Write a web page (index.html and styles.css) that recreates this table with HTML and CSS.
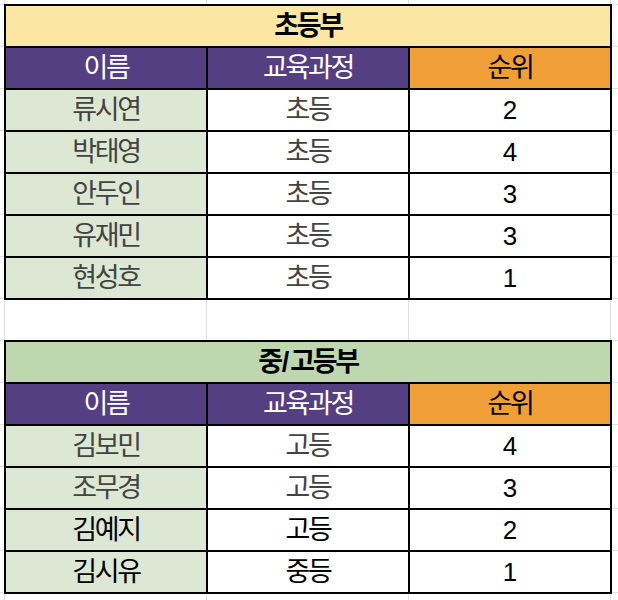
FILE: index.html
```html
<!DOCTYPE html>
<html lang="ko">
<head>
<meta charset="utf-8">
<title>초등부 · 중/고등부</title>
<link rel="stylesheet" href="styles.css">
</head>
<body>
<div class="sheet">
  <div class="table">
    <div class="title yellow">초등부</div>
    <div class="hd purple">이름</div>
    <div class="hd purple">교육과정</div>
    <div class="hd orange">순위</div>

    <div class="c name">류시연</div><div class="c">초등</div><div class="c num">2</div>
    <div class="c name">박태영</div><div class="c">초등</div><div class="c num">4</div>
    <div class="c name">안두인</div><div class="c">초등</div><div class="c num">3</div>
    <div class="c name">유재민</div><div class="c">초등</div><div class="c num">3</div>
    <div class="c name">현성호</div><div class="c">초등</div><div class="c num">1</div>
  </div>

  <div class="spacer"></div>

  <div class="table">
    <div class="title green">중<span class="sl">/</span>고등부</div>
    <div class="hd purple">이름</div>
    <div class="hd purple">교육과정</div>
    <div class="hd orange">순위</div>

    <div class="c name">김보민</div><div class="c">고등</div><div class="c num">4</div>
    <div class="c name">조무경</div><div class="c">고등</div><div class="c num">3</div>
    <div class="c name dark">김예지</div><div class="c dark">고등</div><div class="c num">2</div>
    <div class="c name dark">김시유</div><div class="c dark">중등</div><div class="c num">1</div>
  </div>
</div>
</body>
</html>
```

FILE: styles.css
```css
html, body {
  margin: 0;
  padding: 0;
  height: 100%;
}

body {
  background-color: #ffffff;
  background-image:
    repeating-linear-gradient(to bottom, #e0e0e0 4px, #e0e0e0 5px, transparent 5px, transparent 46px),
    linear-gradient(to right,
      transparent 4px, #e0e0e0 4px, #e0e0e0 5px,
      transparent 5px, transparent 206px, #e0e0e0 206px, #e0e0e0 207px,
      transparent 207px, transparent 408px, #e0e0e0 408px, #e0e0e0 409px,
      transparent 409px, transparent 610px, #e0e0e0 610px, #e0e0e0 611px,
      transparent 611px);
  font-family: "Liberation Sans", "Noto Sans CJK KR", sans-serif;
}

.sheet {
  padding: 4px 0 0 4px;
}

.table {
  display: grid;
  grid-template-columns: repeat(3, 200px);
  grid-auto-rows: 40px;
  gap: 2px;
  padding: 2px;
  background: #000;
  width: fit-content;
}

.spacer {
  height: 40px;
}

.title,
.hd,
.c {
  display: flex;
  align-items: center;
  justify-content: center;
  font-size: 27px;
  line-height: 1;
  letter-spacing: -2.3px;
}

.title {
  grid-column: 1 / -1;
  font-weight: bold;
  color: #000;
}

.title .sl {
  letter-spacing: 0;
  padding: 0 1px;
}

.yellow { background: #fbe6a3; }
.green { background: #bed7ae; }

.hd.purple { background: #553f83; color: #fff; }
.hd.orange { background: #f09e38; color: #000; }

.c {
  background: #fff;
  color: #434343;
}

.c.name { background: #dce8d4; }
.c.dark { color: #000; }

.c.num {
  color: #000;
  font-size: 26px;
  letter-spacing: 0;
}
```
